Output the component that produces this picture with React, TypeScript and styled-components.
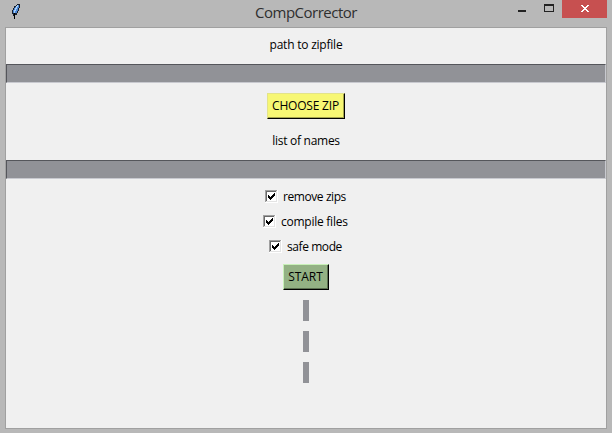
import React from "react";
import styled, { createGlobalStyle } from "styled-components";

const GlobalStyle = createGlobalStyle`
  * { box-sizing: border-box; }
  html, body { margin: 0; padding: 0; overflow: hidden; }
`;

const Window = styled.div`
  display: flex;
  flex-direction: column;
  width: 612px;
  height: 433px;
  padding: 0 5px 4px;
  background: #b8b8b8;
  font-family: "Open Sans", "Noto Sans", sans-serif;
  color: #000;
`;

const TitleBar = styled.header`
  display: grid;
  grid-template-columns: 102px 1fr 102px;
  height: 27px;
  flex: none;
`;

const FeatherIcon = styled.svg`
  display: block;
  margin: 3px 0 0 5px;
`;

const Title = styled.h1`
  margin: 0;
  font-size: 15px;
  font-weight: 400;
  line-height: 24px;
  letter-spacing: -0.5px;
  text-align: center;
  color: #2f2f2f;
`;

const WindowControls = styled.div`
  display: flex;
  justify-content: flex-end;
`;

const ControlButton = styled.button<{ $width: number; $danger?: boolean }>`
  display: block;
  width: ${(p) => p.$width}px;
  height: 18px;
  flex: none;
  padding: 0;
  border: 0;
  background: ${(p) => (p.$danger ? "#c75050" : "transparent")};
  svg { display: block; }
`;

const Client = styled.main`
  display: flex;
  flex-direction: column;
  align-items: center;
  height: 402px;
  width: 602px;
  border: 1px solid #a0a0a0;
  background: #f0f0f0;
`;

const Label = styled.div<{ $spacing: number }>`
  height: 21px;
  margin: 5px 0 10px;
  font-size: 12px;
  line-height: 23px;
  white-space: nowrap;
  letter-spacing: ${(p) => p.$spacing}px;
`;

const Entry = styled.div`
  align-self: stretch;
  height: 19px;
  border: 1px solid;
  border-color: #55565b #c8c9cf #c8c9cf #55565b;
  background: #919297;
`;

const PushButton = styled.button<{ $tone: "yellow" | "green"; $width: number; $spacing: number }>`
  width: ${(p) => p.$width}px;
  height: 26px;
  flex: none;
  padding: 0 1px 0 0;
  border: 1px solid;
  border-color: ${(p) => (p.$tone === "yellow" ? "#e3e38a #000 #000 #e3e38a" : "#c8f0b8 #000 #000 #c8f0b8")};
  background: ${(p) => (p.$tone === "yellow" ? "#f7f774" : "#93b184")};
  box-shadow: inset -1px -1px 0 ${(p) => (p.$tone === "yellow" ? "#a5a54d" : "#5c7052")};
  font: 400 12px/24px "Open Sans", "Noto Sans", sans-serif;
  white-space: nowrap;
  letter-spacing: ${(p) => p.$spacing}px;
  color: #000;
`;

const FileField = styled.section`
  display: flex;
  flex-direction: column;
  align-items: center;
  align-self: stretch;
`;

const Picker = styled.div`
  margin: 10px 0 5px;
  height: 26px;
  display: flex;
`;

const Options = styled.div`
  display: flex;
  flex-direction: column;
  align-items: center;
  margin: 5px 0;
`;

const Option = styled.label<{ $spacing: number; $width: number }>`
  display: flex;
  align-items: center;
  gap: 5px;
  width: ${(p) => p.$width}px;
  height: 25px;
  font-size: 12px;
  line-height: 25px;
  white-space: nowrap;
  letter-spacing: ${(p) => p.$spacing}px;
`;

const CheckBox = styled.svg`
  flex: none;
  display: block;
`;

const Status = styled.div`
  width: 6px;
  height: 21px;
  flex: none;
  margin-top: 10px;
  background: #919297;
`;

const options = [
  { text: "remove zips", width: 82, spacing: -0.42 },
  { text: "compile files", width: 86, spacing: -0.25 },
  { text: "safe mode", width: 74, spacing: -0.42 },
];

const CheckMark = () => (
  <CheckBox width="13" height="13" viewBox="0 0 13 13" shapeRendering="crispEdges">
    <path d="M0 0h13v13H0z" fill="#fff" />
    <path d="M0 0h12v1H1v11H0z" fill="#a0a0a0" />
    <path d="M1 1h10v1H2v9H1z" fill="#696969" />
    <path d="M11 1h1v11H1v-1h10z" fill="#e3e3e3" />
    <path d="M3 5h1v1h1v1h1V6h1V5h1V4h1V3h1v3H9v1H8v1H7v1H6v1H5V9H4V8H3z" fill="#000" />
  </CheckBox>
);

export default function App() {
  return (
    <>
      <GlobalStyle />
      <Window>
        <TitleBar>
          <FeatherIcon width="12" height="17" viewBox="0 0 12 17" shapeRendering="crispEdges">
            <path d="M7 1h3v4H9v3H8v2H7v2H5v1H3v-2H2V7h1V5h1V3h2V2h1z" fill="#17202e" />
            <path d="M7 2h2v3H8v3H7v2H5v1H4v-1H3V7h1V5h1V4h1V3h1z" fill="#4b87d8" />
            <path d="M7 2h1v2H7v2H6v2H5v2H4V7h1V5h1V3h1z" fill="#a9d2fa" />
            <path d="M4 10h1v6H4z" fill="#000" />
          </FeatherIcon>
          <Title>CompCorrector</Title>
          <WindowControls>
            <ControlButton $width={28} aria-label="Minimize">
              <svg width="28" height="18" shapeRendering="crispEdges"><path d="M11 10h8v2h-8z" fill="#222" /></svg>
            </ControlButton>
            <ControlButton $width={27} aria-label="Maximize">
              <svg width="27" height="18" shapeRendering="crispEdges"><path fillRule="evenodd" d="M9 4h10v8H9zM10 6h8v5h-8z" fill="#222" /></svg>
            </ControlButton>
            <ControlButton $width={45} $danger aria-label="Close">
              <svg width="45" height="18" shapeRendering="crispEdges">
                <path d="M19 5h2v1h1v1h2V6h1V5h2v1h-1v1h-1v1h-1v1h1v1h1v1h1v1h-2v-1h-1v-1h-2v1h-1v1h-2v-1h1v-1h1V9h1V8h-1V7h-1V6h-1z" fill="#fff" />
              </svg>
            </ControlButton>
          </WindowControls>
        </TitleBar>
        <Client>
          <FileField>
            <Label $spacing={-0.22}>path to zipfile</Label>
            <Entry />
            <Picker>
              <PushButton $tone="yellow" $width={78} $spacing={-0.2}>CHOOSE ZIP</PushButton>
            </Picker>
          </FileField>
          <FileField>
            <Label $spacing={-0.27}>list of names</Label>
            <Entry />
          </FileField>
          <Options>
            {options.map((o) => (
              <Option key={o.text} $width={o.width} $spacing={o.spacing}>
                <CheckMark />
                <span>{o.text}</span>
              </Option>
            ))}
          </Options>
          <PushButton $tone="green" $width={46} $spacing={-0.1}>START</PushButton>
          <Status />
          <Status />
          <Status />
        </Client>
      </Window>
    </>
  );
}
